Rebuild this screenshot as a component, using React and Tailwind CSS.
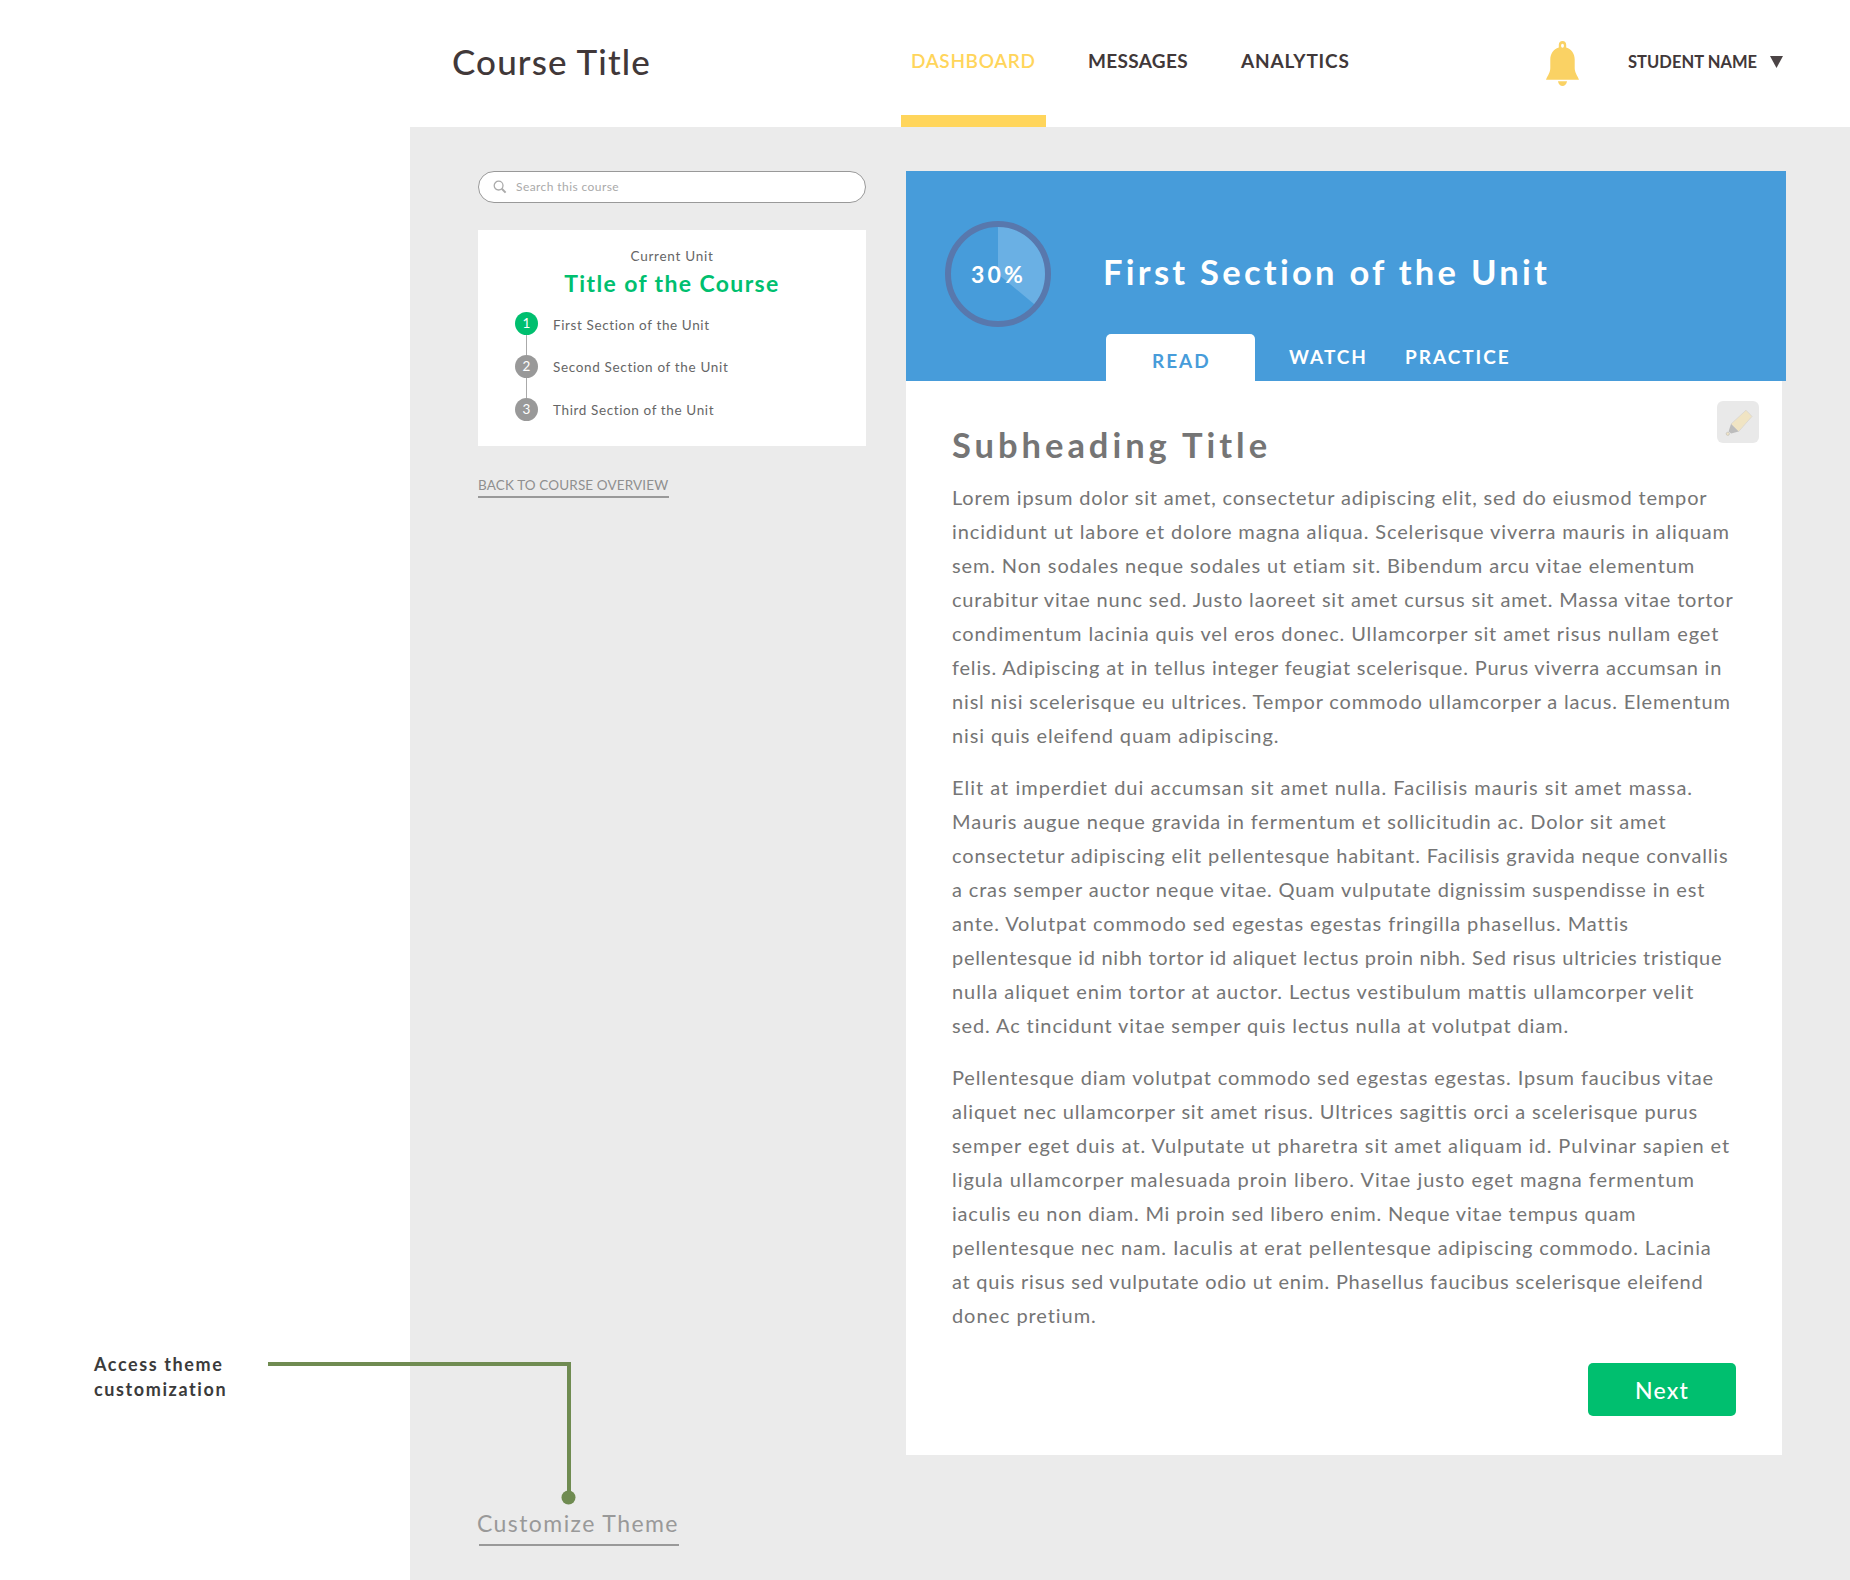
import React from 'react';

const sections = [
  { n: 1, label: 'First Section of the Unit', tone: 'bg-[#00bf6f]', text: 'pt-[2px] tracking-[0.62px]' },
  { n: 2, label: 'Second Section of the Unit', tone: 'bg-[#999999]', text: 'pt-px tracking-[0.66px]' },
  { n: 3, label: 'Third Section of the Unit', tone: 'bg-[#999999]', text: 'pt-px tracking-[0.62px]' },
];

const paragraphs = [
  [
    ['Lorem ipsum dolor sit amet, consectetur adipiscing elit, sed do eiusmod tempor', 'tracking-[0.828px]'],
    ['incididunt ut labore et dolore magna aliqua. Scelerisque viverra mauris in aliquam', 'tracking-[0.879px]'],
    ['sem. Non sodales neque sodales ut etiam sit. Bibendum arcu vitae elementum', 'tracking-[0.864px]'],
    ['curabitur vitae nunc sed. Justo laoreet sit amet cursus sit amet. Massa vitae tortor', 'tracking-[0.82px]'],
    ['condimentum lacinia quis vel eros donec. Ullamcorper sit amet risus nullam eget', 'tracking-[0.885px]'],
    ['felis. Adipiscing at in tellus integer feugiat scelerisque. Purus viverra accumsan in', 'tracking-[0.808px]'],
    ['nisl nisi scelerisque eu ultrices. Tempor commodo ullamcorper a lacus. Elementum', 'tracking-[0.833px]'],
    ['nisi quis eleifend quam adipiscing.', 'tracking-[0.896px]'],
  ],
  [
    ['Elit at imperdiet dui accumsan sit amet nulla. Facilisis mauris sit amet massa.', 'tracking-[1.004px]'],
    ['Mauris augue neque gravida in fermentum et sollicitudin ac. Dolor sit amet', 'tracking-[0.86px]'],
    ['consectetur adipiscing elit pellentesque habitant. Facilisis gravida neque convallis', 'tracking-[0.84px]'],
    ['a cras semper auctor neque vitae. Quam vulputate dignissim suspendisse in est', 'tracking-[0.846px]'],
    ['ante. Volutpat commodo sed egestas egestas fringilla phasellus. Mattis', 'tracking-[0.9px]'],
    ['pellentesque id nibh tortor id aliquet lectus proin nibh. Sed risus ultricies tristique', 'tracking-[0.702px]'],
    ['nulla aliquet enim tortor at auctor. Lectus vestibulum mattis ullamcorper velit', 'tracking-[0.912px]'],
    ['sed. Ac tincidunt vitae semper quis lectus nulla at volutpat diam.', 'tracking-[0.885px]'],
  ],
  [
    ['Pellentesque diam volutpat commodo sed egestas egestas. Ipsum faucibus vitae', 'tracking-[0.871px]'],
    ['aliquet nec ullamcorper sit amet risus. Ultrices sagittis orci a scelerisque purus', 'tracking-[0.82px]'],
    ['semper eget duis at. Vulputate ut pharetra sit amet aliquam id. Pulvinar sapien et', 'tracking-[0.926px]'],
    ['ligula ullamcorper malesuada proin libero. Vitae justo eget magna fermentum', 'tracking-[0.978px]'],
    ['iaculis eu non diam. Mi proin sed libero enim. Neque vitae tempus quam', 'tracking-[0.8px]'],
    ['pellentesque nec nam. Iaculis at erat pellentesque adipiscing commodo. Lacinia', 'tracking-[0.911px]'],
    ['at quis risus sed vulputate odio ut enim. Phasellus faucibus scelerisque eleifend', 'tracking-[0.756px]'],
    ['donec pretium.', 'tracking-[0.92px]'],
  ],
];

function Bell() {
  return (
    <svg className="mt-[41px] ml-[197px] h-[45px] w-[33px] shrink-0" viewBox="0 0 33 45" fill="#fad264">
      <path
        fillRule="evenodd"
        d="M16.5 0C14.2 0 12.8 1.7 12.8 3.8V6.6C7.4 8.3 4.3 12.9 4.3 18.6V27C4.3 31.4 1.9 34.1 0 38.8H33C31.1 34.1 28.7 31.4 28.7 27V18.6C28.7 12.9 25.6 8.3 20.2 6.6V3.8C20.2 1.7 18.8 0 16.5 0ZM16.5 2.8C17.4 2.8 17.9 3.6 17.9 4.8S17.4 6.8 16.5 6.8S15.1 6 15.1 4.8S15.6 2.8 16.5 2.8Z"
      />
      <path d="M12 40.2H21C20.6 42.9 18.6 45 16.5 45S12.4 42.9 12 40.2Z" />
    </svg>
  );
}

function Header() {
  return (
    <header className="flex h-[127px] items-start bg-white whitespace-nowrap text-[#413839]">
      <h1 className="w-[491px] pt-[41px] pl-[42px] text-[35px] leading-[40px] font-medium tracking-[1.12px]">Course Title</h1>
      <nav className="flex h-full text-[19px] leading-6">
        <a className="h-full w-[145px] border-b-[12px] border-[#ffd55b] pt-[49px] pl-[10px] font-semibold tracking-[0.64px] text-[#ffd55b]">
          DASHBOARD
        </a>
        <a className="w-[153px] pt-[49px] pl-[42px] font-bold tracking-[0.325px]">MESSAGES</a>
        <a className="w-[150px] pt-[49px] pl-[42px] font-bold tracking-[0.8px]">ANALYTICS</a>
      </nav>
      <Bell />
      <div className="flex pt-[52px] pl-[49px]">
        <span className="w-[142px] text-[16.5px] leading-5 font-bold tracking-[0.043px]">STUDENT NAME</span>
        <svg className="mt-1 h-3 w-[13px]" viewBox="0 0 13 12" fill="#4b4445">
          <path d="M0 0H13L6.5 12Z" />
        </svg>
      </div>
    </header>
  );
}

function Sidebar() {
  return (
    <aside className="flex w-[388px] flex-col items-start whitespace-nowrap">
      <div className="flex h-8 w-full items-center rounded-full border border-[#999999] bg-white pl-[14px]">
        <svg className="h-[14px] w-[14px]" viewBox="0 0 14 14" fill="none" stroke="#aaaaaa">
          <circle cx="5.6" cy="5.6" r="4.4" strokeWidth="1.3" />
          <path d="M8.8 8.8L12.6 12.6" strokeWidth="2" />
        </svg>
        <span className="pl-[9px] text-[12px] leading-4 tracking-[0.42px] text-[#aaaaaa]">Search this course</span>
      </div>

      <section className="mt-[27px] h-[216px] w-full bg-white pt-4">
        <p className="text-center text-[13.5px] leading-5 tracking-[0.73px] text-[#666666]">Current Unit</p>
        <h2 className="mt-[3px] text-center text-[23px] leading-7 font-bold tracking-[1.367px] text-[#00bf6f]">Title of the Course</h2>
        <ol className="mt-[15px] pl-[37px]">
          {sections.map((s, i) => (
            <li key={s.n} className="flex h-[43px] items-start text-[13.5px] leading-[23px]">
              <div className="flex flex-col items-center">
                <span className={`h-[23px] w-[23px] rounded-full text-center leading-[22px] text-white ${s.tone}`}>{s.n}</span>
                {i < 2 && <span className="h-5 w-px bg-[#aaaaaa]" />}
              </div>
              <span className={`ml-[15px] text-[#666666] ${s.text}`}>{s.label}</span>
            </li>
          ))}
        </ol>
      </section>

      <a className="mt-[30px] w-[190.5px] border-b-2 border-[#999999] pb-[2px] text-[13.5px] leading-[18px] tracking-[0.13px] text-[#8f8f8f]">
        BACK TO COURSE OVERVIEW
      </a>

      <div className="mt-auto mb-[34px]">
        <a className="-mt-px -ml-px block pb-px text-[23px] leading-7 tracking-[1.42px] text-[#999999]">Customize Theme</a>
        <div className="mt-[6px] ml-px h-[2.5px] w-[200px] bg-[#999999]" />
      </div>
    </aside>
  );
}

function Progress() {
  return (
    <div className="relative mt-[50px] ml-[39px] h-[106px] w-[106px]">
      <svg className="h-full w-full" viewBox="0 0 106 106">
        <path d="M53 53V3A50 50 0 0 1 91.4 85Z" fill="#6ab0e4" />
        <circle cx="53" cy="53" r="50" fill="none" stroke="#5878ad" strokeWidth="6" />
      </svg>
      <span className="absolute top-[39px] left-[26px] text-[23px] leading-7 font-bold tracking-[3.2px] text-white">30%</span>
    </div>
  );
}

function UnitHeader() {
  return (
    <div className="flex h-[210px] w-[880px] bg-[#479cda] whitespace-nowrap text-white">
      <Progress />
      <div className="ml-[52px] flex flex-col pt-[80px]">
        <h2 className="text-[34.5px] leading-[42px] font-bold tracking-[3.27px]">First Section of the Unit</h2>
        <div className="mt-auto ml-[3px] flex h-[47px] text-[19px] leading-6 font-bold">
          <a className="w-[149px] rounded-t-[5px] bg-white pt-[15px] pl-[46px] tracking-[1.944px] text-[#479cda]">READ</a>
          <a className="w-[150px] pt-[11px] pl-[34px] tracking-[1.981px]">WATCH</a>
          <a className="pt-[11px] tracking-[1.971px]">PRACTICE</a>
        </div>
      </div>
    </div>
  );
}

function Highlighter() {
  return (
    <button className="mr-[23px] h-[42px] w-[42px] rounded-[6px] bg-[#e9e9e9]">
      <svg className="h-full w-full" viewBox="0 0 42 42">
        <path d="M29 9.2L35 15.4L21.6 30.6L14 23Z" fill="#f0e4c3" stroke="#d9d6cf" strokeWidth="0.8" />
        <path d="M14 23L21.6 30.6L14.2 32.4L11.6 30.4Z" fill="#bcbcbc" />
        <circle cx="10.8" cy="32.8" r="1.6" fill="#efe3c6" stroke="#c9c5bd" strokeWidth="0.8" />
      </svg>
    </button>
  );
}

function Lesson() {
  return (
    <article className="h-[1074px] w-[876px] bg-white pt-5 pl-[46px] whitespace-nowrap text-[#757575]">
      <div className="flex h-[79px] items-start justify-between">
        <h3 className="pt-[23px] text-[34.5px] leading-[42px] font-bold tracking-[3.97px]">Subheading Title</h3>
        <Highlighter />
      </div>
      <div className="flex flex-col gap-[18px] text-[20px] leading-[34px]">
        {paragraphs.map((lines, i) => (
          <p key={i}>
            {lines.map(([line, tracking]) => (
              <span key={line} className={`block ${tracking}`}>{line}</span>
            ))}
          </p>
        ))}
      </div>
      <button className="mt-[31px] ml-[636px] block h-[53px] w-[148px] rounded-[5px] bg-[#00bf6f] pt-px text-[23px] font-medium tracking-[1.2px] text-white">
        Next
      </button>
    </article>
  );
}

export default function App() {
  return (
    <div className="relative grid h-[1580px] w-[1850px] grid-cols-[410px_1fr] overflow-hidden bg-white font-['Lato','Open_Sans',sans-serif] [font-variant-ligatures:none]">
      <p className="pt-[1352px] pl-[94px] text-[18px] leading-[25px] font-bold tracking-[1.6px] text-[#3b3b3b]">
        Access theme
        <br />
        customization
      </p>
      <div className="flex flex-col">
        <Header />
        <main className="flex flex-1 gap-[40px] bg-[#ebebeb] pt-[44px] pl-[68px]">
          <Sidebar />
          <div>
            <UnitHeader />
            <Lesson />
          </div>
        </main>
      </div>
      <svg className="absolute top-[1360px] left-[268px] h-[146px] w-[308px]" viewBox="0 0 308 146">
        <path d="M0 4H301V138" fill="none" stroke="#6f8b51" strokeWidth="4" />
        <circle cx="300.5" cy="137.5" r="7" fill="#6f8b51" />
      </svg>
    </div>
  );
}
